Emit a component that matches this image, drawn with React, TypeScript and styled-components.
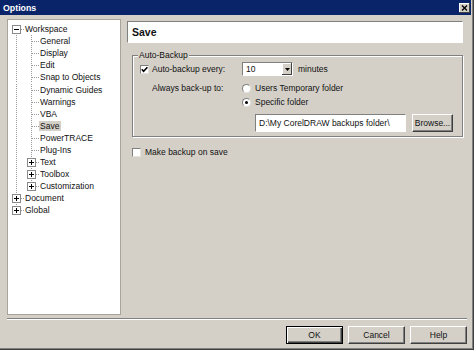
import React from "react";
import styled, { createGlobalStyle } from "styled-components";

const GlobalStyle = createGlobalStyle`
  html, body {
    margin: 0;
    padding: 0;
    background: #d4d0c8;
  }
  body {
    font-family: "Liberation Sans", Arial, sans-serif;
    font-size: 8.5px;
    color: #111;
  }
`;

const Window = styled.div`
  width: 474px;
  height: 350px;
  box-sizing: border-box;
  padding: 0 3px 3px 0;
  background: #d4d0c8;
  display: flex;
  flex-direction: column;
  overflow: hidden;
  box-shadow: inset -1px -1px #404040, inset -2px -2px #808080;
`;

const TitleBar = styled.div`
  height: 15px;
  flex: none;
  background: #0a246a;
  display: flex;
  align-items: center;
  justify-content: space-between;
  padding: 0 1px 0 3px;
`;

const TitleText = styled.span`
  color: #fff;
  font-weight: bold;
  font-size: 8.8px;
`;

const CloseButton = styled.div`
  width: 11px;
  height: 10px;
  background: #d4d0c8;
  box-shadow: inset -1px -1px #404040, inset 1px 1px #fff;
  display: flex;
  align-items: center;
  justify-content: center;
`;

const Main = styled.div`
  display: flex;
  gap: 6px;
  padding: 4px 0 0 7px;
`;

const TreePanel = styled.div`
  width: 114px;
  height: 296px;
  box-sizing: border-box;
  background: #fff;
  border: 1px solid #a7a49c;
  padding: 3px 0 0 1px;
`;

const TreeRow = styled.div`
  height: 12.1px;
  display: flex;
  align-items: center;
`;

const TreeLabel = styled.span<{ $selected?: boolean }>`
  height: 10px;
  line-height: 10px;
  padding: 0 2px 0 1px;
  white-space: nowrap;
  background: ${(p) => (p.$selected ? "#d4d0c8" : "transparent")};
`;

const RightPanel = styled.div`
  width: 336px;
  display: flex;
  flex-direction: column;
  padding-top: 2px;
`;

const Header = styled.div`
  height: 22px;
  box-sizing: border-box;
  background: #fff;
  border: 1px solid;
  border-color: #808080 #fff #fff #808080;
  padding-left: 4px;
  display: flex;
  align-items: center;
  font-weight: bold;
  font-size: 10.5px;
`;

const GroupBox = styled.div`
  position: relative;
  height: 82px;
  box-sizing: border-box;
  margin: 12px 0 0 5px;
  border: 1px solid #808080;
  box-shadow: inset 1px 1px #fff, 1px 1px #fff;
  padding: 6px 0 0 7px;
`;

const GroupLabel = styled.span`
  position: absolute;
  top: -6px;
  left: 5px;
  padding: 0 1px;
  line-height: 11px;
  background: #d4d0c8;
`;

const Row = styled.div<{ $top?: number; $indent?: number }>`
  display: flex;
  align-items: center;
  height: 14px;
  margin-top: ${(p) => p.$top ?? 0}px;
  padding-left: ${(p) => p.$indent ?? 0}px;
`;

const LabelCell = styled.div<{ $pad?: number }>`
  width: 102px;
  box-sizing: border-box;
  padding-left: ${(p) => p.$pad ?? 0}px;
  display: flex;
  align-items: center;
  gap: 3px;
  white-space: nowrap;
`;

const Check = styled.span`
  width: 9px;
  height: 9px;
  box-sizing: border-box;
  flex: none;
  background: #fff;
  border: 1px solid;
  border-color: #808080 #e4e2dc #e4e2dc #808080;
  display: flex;
  align-items: center;
  justify-content: center;
`;

const Radio = styled.span<{ $on?: boolean }>`
  width: 9px;
  height: 9px;
  box-sizing: border-box;
  flex: none;
  border-radius: 50%;
  background: #fff;
  border: 1px solid;
  border-color: #808080 #e4e2dc #e4e2dc #808080;
  display: flex;
  align-items: center;
  justify-content: center;
  &::after {
    content: "";
    width: 3px;
    height: 3px;
    border-radius: 50%;
    background: ${(p) => (p.$on ? "#000" : "transparent")};
  }
`;

const Option = styled.div`
  display: flex;
  align-items: center;
  gap: 4px;
  white-space: nowrap;
`;

const Combo = styled.div`
  width: 51px;
  height: 14px;
  box-sizing: border-box;
  background: #fff;
  border: 1px solid;
  border-color: #808080 #fff #fff #808080;
  display: flex;
  align-items: center;
  justify-content: space-between;
  padding-left: 3px;
  margin-right: 5px;
`;

const ComboArrow = styled.div`
  width: 10px;
  height: 12px;
  background: #d4d0c8;
  box-shadow: inset -1px -1px #404040, inset 1px 1px #fff;
  display: flex;
  align-items: center;
  justify-content: center;
`;

const TextInput = styled.div`
  width: 151px;
  height: 18px;
  box-sizing: border-box;
  background: #fff;
  border: 1px solid;
  border-color: #808080 #fff #fff #808080;
  padding-left: 3px;
  display: flex;
  align-items: center;
  white-space: nowrap;
`;

const Button = styled.div<{ $width: number; $default?: boolean }>`
  width: ${(p) => p.$width}px;
  height: 18px;
  box-sizing: border-box;
  background: #d4d0c8;
  display: flex;
  align-items: center;
  justify-content: center;
  border: 1px solid;
  border-color: ${(p) => (p.$default ? "#000" : "#fff #404040 #404040 #fff")};
  box-shadow: ${(p) =>
    p.$default
      ? "inset 1px 1px #fff, inset -1px -1px #404040, inset -2px -2px #808080"
      : "inset -1px -1px #808080"};
`;

const Separator = styled.div`
  height: 2px;
  box-sizing: border-box;
  margin: 3px 4px 0 7px;
  border-top: 1px solid #808080;
  border-bottom: 1px solid #fff;
`;

const ButtonRow = styled.div`
  display: flex;
  justify-content: flex-end;
  gap: 5px;
  padding: 6px 4px 0 0;
`;

type Line = "none" | "pipe" | "mid" | "last" | "first";

const GuideCell: React.FC<{ line: Line; box?: "plus" | "minus" }> = ({ line, box }) => {
  const dot = { stroke: "#9a9a9a", strokeWidth: 1, strokeDasharray: "1 1" };
  return (
    <svg width="15" height="12" style={{ flex: "none" }}>
      {(line === "pipe" || line === "mid") && <line x1="7.5" y1="0" x2="7.5" y2="12" {...dot} />}
      {line === "last" && <line x1="7.5" y1="0" x2="7.5" y2="7" {...dot} />}
      {line === "first" && <line x1="7.5" y1="6" x2="7.5" y2="12" {...dot} />}
      {line !== "none" && line !== "pipe" && <line x1="8" y1="6.5" x2="15" y2="6.5" {...dot} />}
      {box && (
        <>
          <rect x="3.5" y="2.5" width="8" height="8" fill="#fff" stroke="#8a8a8a" />
          <line x1="5" y1="6.5" x2="10" y2="6.5" stroke="#000" />
          {box === "plus" && <line x1="7.5" y1="4" x2="7.5" y2="9" stroke="#000" />}
        </>
      )}
    </svg>
  );
};

type Node = { label: string; guides: Line[]; box?: "plus" | "minus"; selected?: boolean };

const tree: Node[] = [
  { label: "Workspace", guides: ["first"], box: "minus" },
  { label: "General", guides: ["pipe", "mid"] },
  { label: "Display", guides: ["pipe", "mid"] },
  { label: "Edit", guides: ["pipe", "mid"] },
  { label: "Snap to Objects", guides: ["pipe", "mid"] },
  { label: "Dynamic Guides", guides: ["pipe", "mid"] },
  { label: "Warnings", guides: ["pipe", "mid"] },
  { label: "VBA", guides: ["pipe", "mid"] },
  { label: "Save", guides: ["pipe", "mid"], selected: true },
  { label: "PowerTRACE", guides: ["pipe", "mid"] },
  { label: "Plug-Ins", guides: ["pipe", "mid"] },
  { label: "Text", guides: ["pipe", "mid"], box: "plus" },
  { label: "Toolbox", guides: ["pipe", "mid"], box: "plus" },
  { label: "Customization", guides: ["pipe", "last"], box: "plus" },
  { label: "Document", guides: ["mid"], box: "plus" },
  { label: "Global", guides: ["last"], box: "plus" },
];

const CheckMark = () => (
  <svg width="7" height="7" viewBox="0 0 7 7">
    <polyline points="0.8,3.2 2.6,5.2 6.4,1.2" fill="none" stroke="#000" strokeWidth="1.6" />
  </svg>
);

const App: React.FC = () => (
  <>
    <GlobalStyle />
    <Window>
      <TitleBar>
        <TitleText>Options</TitleText>
        <CloseButton>
          <svg width="7" height="6" viewBox="0 0 7 6">
            <path d="M1 0.5 L6 5.5 M6 0.5 L1 5.5" stroke="#000" strokeWidth="1.4" />
          </svg>
        </CloseButton>
      </TitleBar>
      <Main>
        <TreePanel>
          {tree.map((n, i) => (
            <TreeRow key={i}>
              {n.guides.map((g, j) => (
                <GuideCell key={j} line={g} box={j === n.guides.length - 1 ? n.box : undefined} />
              ))}
              <TreeLabel $selected={n.selected}>{n.label}</TreeLabel>
            </TreeRow>
          ))}
        </TreePanel>
        <RightPanel>
          <Header>Save</Header>
          <GroupBox>
            <GroupLabel>Auto-Backup</GroupLabel>
            <Row>
              <LabelCell>
                <Check>
                  <CheckMark />
                </Check>
                Auto-backup every:
              </LabelCell>
              <Combo>
                <span>10</span>
                <ComboArrow>
                  <svg width="5" height="3" viewBox="0 0 5 3">
                    <path d="M0 0 H5 L2.5 3 Z" fill="#000" />
                  </svg>
                </ComboArrow>
              </Combo>
              minutes
            </Row>
            <Row $top={5}>
              <LabelCell $pad={12}>Always back-up to:</LabelCell>
              <Option>
                <Radio />
                Users Temporary folder
              </Option>
            </Row>
            <Row>
              <LabelCell />
              <Option>
                <Radio $on />
                Specific folder
              </Option>
            </Row>
            <Row $top={4} $indent={115} style={{ height: 19 }}>
              <TextInput>D:\My CorelDRAW backups folder\</TextInput>
              <Button $width={41} style={{ marginLeft: 6 }}>
                Browse...
              </Button>
            </Row>
          </GroupBox>
          <Row $top={8} $indent={5}>
            <Option>
              <Check />
              Make backup on save
            </Option>
          </Row>
        </RightPanel>
      </Main>
      <Separator />
      <ButtonRow>
        <Button $width={57} $default>
          OK
        </Button>
        <Button $width={57}>Cancel</Button>
        <Button $width={57}>Help</Button>
      </ButtonRow>
    </Window>
  </>
);

export default App;
